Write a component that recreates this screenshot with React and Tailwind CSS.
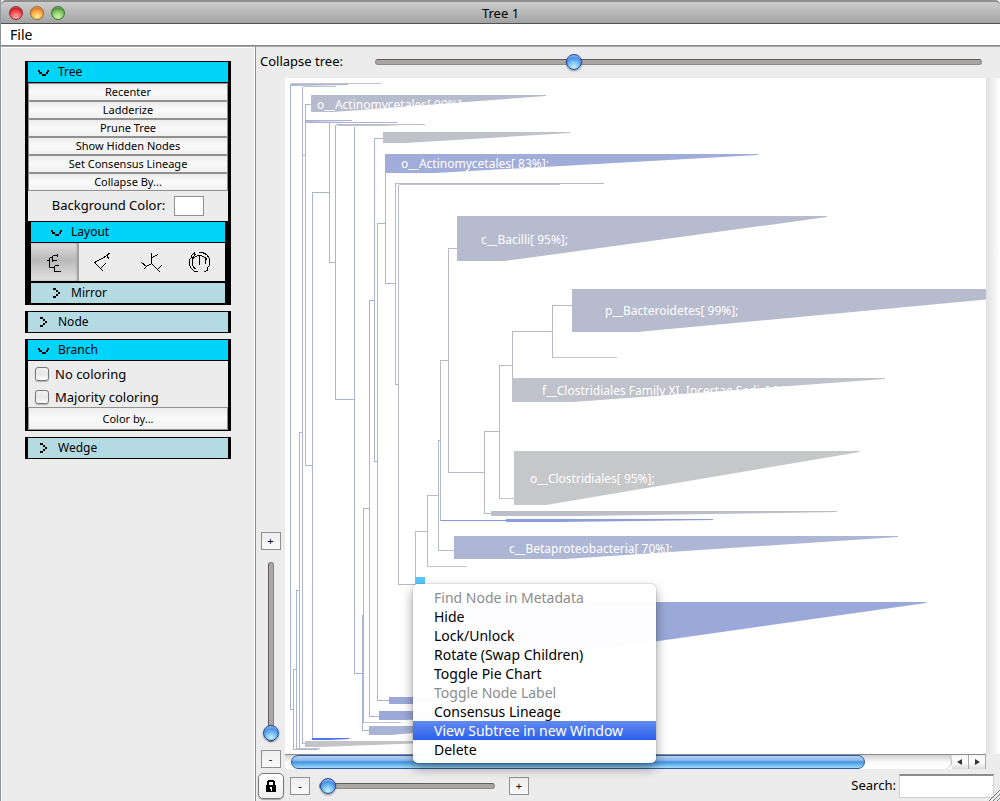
import React from "react";

const BLUE = "#a9b4d8";
const MIX = "#b6bacb";
const GREY = "#c3c4c8";

const BRANCHES = [
  [BLUE, "M290 83V709H293 M302 86V743H305 M302 155H305 M311 104H305V465H312 M302 432H299V747 M299 590H296V748 M296 669H293V749H317"],
  [BLUE, "M305 120H351 M305 122H396 M290 84H347 M329 122V262H335 M329 192H312V738 M335 124V399H354 M354 126V673H362 M383 138H374V461H377 M374 300H369V716H379 M385 172V283H395 M385 223H377V700H389 M369 508H363V722 M363 615H362V730H369"],
  [MIX, "M603 183H395V384H398 M398 184V584H415 M335 124H424 M427 531H415V582 M438 495H427V566 M440 440H438V550H454 M448 360H440V520 M457 248H448V472H484 M499 431H484V513H491 M512 365H499V498H514 M552 331H512V378 M572 305H552V357"],
  [GREY, "M290 83H380 M302 86H335 M338 125H382 M398 184H559 M427 566H466 M552 357H616 M499 498H514 M363 722H400 M296 748H319"],
  ["#8799dc", "M440 520H506"],
];

const WEDGES = [
  ["#a9b4d8", "290,84 347,84 347,85 290,86"],
  ["#a9b4d8", "305,120 351,120 351,121 305,122"],
  ["#c3c4c8", "338,125 424,124 382,126 338,126"],
  ["#b6bbce", "311,95 546,95 546,96 333,112 311,112"],
  ["#c0c2ca", "383,132 570,132 570,133 405,143 383,143"],
  ["#a0acda", "385,154 758,154 758,155 435,173 385,173"],
  ["#b6bbce", "457,216 827,216 827,217 505,261 457,261"],
  ["#b6bbce", "572,289 1100,289 637,332 572,332"],
  ["#bfc1cb", "512,378 885,378 885,379 573,402 512,402"],
  ["#c6c7c9", "514,451 860,451 860,452 546,505 514,505"],
  ["#bcbfc9", "491,511 837,511 837,512 580,516 491,516"],
  ["#8c9cdc", "506,519 713,519 713,520 560,522 506,522"],
  ["#adb6d5", "454,536 898,536 898,537 565,559 454,559"],
  ["#9aa9da", "450,602 926,602 926,603 560,655 450,655"],
  ["#9ba9da", "389,697 600,697 420,704 389,704"],
  ["#9ba9da", "379,711 600,711 405,720 379,720"],
  ["#a8b3d5", "369,726 500,726 390,735 369,735"],
  ["#4f76ee", "312,738 349,738 349,739 330,740 312,740"],
  ["#c3c4c8", "305,741 480,741 320,747 305,747"],
];

const LABELS = [
  [317, 109, "o__Actinomycetales[ 99%];"],
  [401, 168, "o__Actinomycetales[ 83%];"],
  [481, 244, "c__Bacilli[ 95%];"],
  [605, 315, "p__Bacteroidetes[ 99%];"],
  [542, 395, "f__Clostridiales Family XI. Incertae Sedis[ 99%];"],
  [530, 483, "o__Clostridiales[ 95%];"],
  [509, 553, "c__Betaproteobacteria[ 70%];"],
];

const MENU = [
  ["Find Node in Metadata", "disabled"],
  ["Hide"],
  ["Lock/Unlock"],
  ["Rotate (Swap Children)"],
  ["Toggle Pie Chart"],
  ["Toggle Node Label", "disabled"],
  ["Consensus Lineage"],
  ["View Subtree in new Window", "active"],
  ["Delete"],
];

const LAYOUTS = [
  ["Rectangular", "M3 10H6 M6 7V17 M6 7H9 M9 5V11 M9 5H14 M14 3V6 M9 10H13 M6 17H11 M11 15V21 M11 15H15 M11 21H17"],
  ["Triangular", "M3 12L14 6L19 2 M15 5L18 9 M3 12L9 18L12 21 M9 18L14 13"],
  ["Radial", "M12 2V13 M12 7L19 4 M12 13L7 16 M2 12L7 16L4 19 M12 13L18 19L21 22 M18 19L22 15"],
  ["Polar", "M8 2C5 3 4 5 4 7L2 9C1 12 2 15 3 17L7 21H10 M11 2H15C18 3 20 4 21 7L22 8V15L20 17V20L17 21 M5 13C4 9 7 5 12 5S19 8 18 14 M9 3C6 5 4 8 5 13C5 16 7 18 9 19 M12 5V14 M18 7L20 10"],
];

const horizontalSlider =
  "block h-4 min-w-0 appearance-none bg-transparent [&::-webkit-slider-runnable-track]:h-[6px] [&::-webkit-slider-runnable-track]:rounded-full [&::-webkit-slider-runnable-track]:border [&::-webkit-slider-runnable-track]:border-[#8f8b8b] [&::-webkit-slider-runnable-track]:border-t-[#625d5d] [&::-webkit-slider-runnable-track]:bg-[#aaa6a6] [&::-webkit-slider-thumb]:-mt-[6px] [&::-webkit-slider-thumb]:size-4 [&::-webkit-slider-thumb]:appearance-none [&::-webkit-slider-thumb]:rounded-full [&::-webkit-slider-thumb]:border [&::-webkit-slider-thumb]:border-[#23479d] [&::-webkit-slider-thumb]:bg-[radial-gradient(circle_at_50%_85%,#c6f4ff_0%,#6bb6f2_45%,#4f8fe0_65%,#bcd8fa_100%)] [&::-webkit-slider-thumb]:shadow-[0_1px_2px_rgba(0,0,0,0.4)]";

const verticalSlider =
  "block w-4 min-h-0 appearance-none bg-transparent [direction:rtl] [writing-mode:vertical-lr] [&::-webkit-slider-runnable-track]:w-[6px] [&::-webkit-slider-runnable-track]:rounded-full [&::-webkit-slider-runnable-track]:border [&::-webkit-slider-runnable-track]:border-[#858080] [&::-webkit-slider-runnable-track]:border-l-[#625d5d] [&::-webkit-slider-runnable-track]:bg-[#aaa6a6] [&::-webkit-slider-thumb]:-ml-[6px] [&::-webkit-slider-thumb]:size-4 [&::-webkit-slider-thumb]:appearance-none [&::-webkit-slider-thumb]:rounded-full [&::-webkit-slider-thumb]:border [&::-webkit-slider-thumb]:border-[#23479d] [&::-webkit-slider-thumb]:bg-[radial-gradient(circle_at_50%_85%,#c6f4ff_0%,#6bb6f2_45%,#4f8fe0_65%,#bcd8fa_100%)] [&::-webkit-slider-thumb]:shadow-[0_1px_2px_rgba(0,0,0,0.4)]";

function Header({ label, open, nested }) {
  return (
    <button
      type="button"
      aria-expanded={open ? "true" : "false"}
      className={`flex h-5 w-full items-center gap-2 text-left text-[12px] leading-5 ${open ? "bg-[#00d4fa]" : "bg-[#b5dbe2]"} ${nested ? "pl-5" : "pl-[10px]"}`}
    >
      <svg className="size-3 shrink-0" viewBox="0 0 12 12" shapeRendering="crispEdges" aria-hidden="true">
        <path d={open ? "M0 4h2v2h-2z M1 6h3v2h-3z M4 8h4v2h-4z M8 6h2v2h-2z M9 4h2v2h-2z" : "M2 1h3v2h-3z M5 3h2v2h-2z M7 5h2v2h-2z M5 7h2v2h-2z M2 9h3v2h-3z"} />
      </svg>
      {label}
    </button>
  );
}

function SmallButton({ children, tall }) {
  return (
    <button
      type="button"
      className={`block w-full border border-[#909090] bg-linear-to-b from-[#ececec] via-[#fafafa] to-[#f0f0f0] text-center text-[11px] ${tall ? "h-[23px] leading-5" : "h-[18px] leading-4"}`}
    >
      {children}
    </button>
  );
}

function StepButton({ label, children }) {
  return (
    <button
      type="button"
      aria-label={label}
      className="flex h-[18px] w-5 shrink-0 items-center justify-center border border-[#909090] bg-linear-to-b from-[#ededed] to-[#fafafa] text-[11px] leading-4"
    >
      {children}
    </button>
  );
}

function Sidebar() {
  return (
    <aside className="w-[255px] shrink-0 border-r border-[#8c8c8c] pt-[14px] pl-6 shadow-[inset_1px_1px_0_#fff,inset_-1px_0_0_#fff]">
      <div className="flex w-[206px] flex-col gap-[6px]">
        <section className="border-x-[3px] border-y border-black bg-[#ececec]">
          <Header label="Tree" open />
          <div className="border-t border-black">
            {["Recenter", "Ladderize", "Prune Tree", "Show Hidden Nodes", "Set Consensus Lineage", "Collapse By..."].map((t) => (
              <SmallButton key={t}>{t}</SmallButton>
            ))}
          </div>
          <div className="flex h-[30px] items-center justify-center gap-[9px] text-[13px]">
            <span>Background Color:</span>
            <button type="button" aria-label="Choose background color" className="h-5 w-[30px] border border-[#909090] bg-white" />
          </div>
          <div className="border-x-[3px] border-y border-black">
            <Header label="Layout" open nested />
            <div className="flex h-[41px] border-t border-b-2 border-black">
              {LAYOUTS.map(([name, d], i) => (
                <button
                  key={name}
                  type="button"
                  aria-label={name}
                  className={`flex w-12 items-center justify-center ${i === 0 ? "bg-[linear-gradient(to_bottom,#dedede,#b9b9b9_45%,#e2e2e2)] shadow-[inset_-2px_0_2px_#999]" : ""}`}
                >
                  <svg className="size-6" viewBox="0 0 24 24" fill="none" stroke="#000" strokeWidth="1" shapeRendering="crispEdges" aria-hidden="true">
                    <path d={d} transform="translate(.5 .5)" />
                  </svg>
                </button>
              ))}
            </div>
            <Header label="Mirror" nested />
          </div>
        </section>
        <section className="border-x-[3px] border-y border-black">
          <Header label="Node" />
        </section>
        <section className="border-x-[3px] border-y border-black">
          <Header label="Branch" open />
          <div className="border-t border-black">
            {["No coloring", "Majority coloring"].map((t) => (
              <label key={t} className="flex h-[23px] items-center gap-[6px] pt-[2px] pl-[7px] text-[13px] leading-5">
                <input
                  type="checkbox"
                  className="size-[14px] appearance-none rounded-[3px] border border-[#777] bg-linear-to-b from-[#f2f2f2] via-[#e6e6e6] to-white shadow-[0_1px_1px_rgba(0,0,0,0.25)]"
                />
                {t}
              </label>
            ))}
            <SmallButton tall>Color by...</SmallButton>
          </div>
        </section>
        <section className="border-x-[3px] border-y border-black">
          <Header label="Wedge" />
        </section>
      </div>
    </aside>
  );
}

function TreeCanvas() {
  return (
    <svg className="block size-full bg-white" role="img" aria-label="Phylogenetic tree">
      <g transform="translate(-285 -78)">
        <g transform="translate(.5 .5)" fill="none" strokeWidth="1" shapeRendering="crispEdges">
          {BRANCHES.map(([c, d]) => (
            <path key={d} d={d} stroke={c} />
          ))}
        </g>
        {WEDGES.map(([c, p]) => (
          <polygon key={p} points={p} fill={c} />
        ))}
        <rect x="415" y="577" width="10" height="7" fill="#5cc6fc" />
        <g fill="#fff" className="text-[12px]">
          {LABELS.map(([x, y, t]) => (
            <text key={y} x={x} y={y}>
              {t}
            </text>
          ))}
        </g>
      </g>
    </svg>
  );
}

function ContextMenu() {
  return (
    <div role="menu" className="absolute top-[506px] left-32 w-[243px] rounded-[5px] bg-white/98 py-1 shadow-[0_0_1px_rgba(0,0,0,0.6),0_5px_12px_rgba(0,0,0,0.4)]">
      {MENU.map(([t, state]) => (
        <button
          key={t}
          type="button"
          role="menuitem"
          disabled={state === "disabled"}
          className={`block h-[19px] w-full pl-[21px] text-left text-[14px] leading-[19px] whitespace-nowrap ${
            state === "active" ? "bg-linear-to-b from-[#6289f0] to-[#2a5fec] text-white" : state === "disabled" ? "text-[#8c8c8c]" : "text-black"
          }`}
        >
          {t}
        </button>
      ))}
    </div>
  );
}

function ScrollBar() {
  return (
    <div className="flex h-[15px] border-t border-[#8b8b8b] bg-linear-to-b from-[#cfcfcf] via-[#fafafa] to-white">
      <div className="mr-[-6px] min-w-0 flex-1 rounded-r-full border-r border-[#b5b5b5] pl-[6px]">
        <div className="h-[14px] w-[87%] rounded-full border border-[#2c5aa8] bg-[linear-gradient(to_bottom,#b5d0f0,#8fbdec_35%,#3f92e0_50%,#a5dcfa)]" />
      </div>
      <div className="w-[6px]" />
      {[
        ["Scroll left", "M6 1L1 4L6 7Z"],
        ["Scroll right", "M2 1L7 4L2 7Z"],
      ].map(([name, d]) => (
        <button key={name} type="button" aria-label={name} className="flex w-[17px] items-center justify-center border-r border-[#aaa] bg-linear-to-b from-[#f4f4f4] via-white to-[#dcdcdc]">
          <svg className="size-2" viewBox="0 0 8 8" fill="#333" aria-hidden="true">
            <path d={d} />
          </svg>
        </button>
      ))}
    </div>
  );
}

export default function App() {
  return (
    <div className="flex min-h-screen flex-col border-l border-[#8f959e] bg-[#ececec] font-['Noto_Sans','Open_Sans',sans-serif] text-black">
      <header className="flex h-6 items-center rounded-t-[5px] border-t-2 border-b border-t-[#8f8f8f] border-b-[#515151] bg-linear-to-b from-[#cdcdcd] to-[#a3a3a3] px-2">
        <div className="flex flex-1 gap-[7px]">
          <button type="button" aria-label="Close" className="size-[14px] rounded-full border border-[#8f2a2c] bg-[radial-gradient(circle_at_50%_85%,#ffb3a8_0%,#f04a50_50%,#c51f2b_75%,#f2c8c8_100%)]" />
          <button type="button" aria-label="Minimize" className="size-[14px] rounded-full border border-[#a3622a] bg-[radial-gradient(circle_at_50%_85%,#fff08c_0%,#f7ae4a_50%,#dc7b28_75%,#f5dcc0_100%)]" />
          <button type="button" aria-label="Zoom" className="size-[14px] rounded-full border border-[#3f7434] bg-[radial-gradient(circle_at_50%_85%,#d4f7a4_0%,#84c86a_50%,#4c973e_75%,#cfe6c8_100%)]" />
        </div>
        <h1 className="text-[13px] leading-5">Tree 1</h1>
        <div className="flex-1" />
      </header>
      <nav className="flex h-[22px] items-center border-b border-[#858585] bg-white pl-[9px]">
        <button type="button" className="text-[14px] leading-5">File</button>
      </nav>
      <div className="flex flex-1 border-t border-[#a9a9a9]">
        <Sidebar />
        <main className="flex min-w-0 flex-1 flex-col">
          <div className="flex h-[31px] items-center gap-8 pr-[18px] pb-[2px] pl-1">
            <label htmlFor="collapse" className="shrink-0 text-[13px]">Collapse tree:</label>
            <input id="collapse" type="range" max="1000" defaultValue="322" className={`${horizontalSlider} flex-1`} />
          </div>
          <div className="flex flex-1">
            <div className="flex w-[29px] shrink-0 flex-col items-center justify-end gap-2 pb-[1px]">
              <StepButton label="Zoom in vertically">+</StepButton>
              <input type="range" aria-label="Vertical zoom" max="100" defaultValue="0" className={`${verticalSlider} mt-1 h-[180px]`} />
              <StepButton label="Zoom out vertically">-</StepButton>
            </div>
            <div className="relative flex min-w-0 flex-1 flex-col">
              <div className="relative min-h-0 flex-1 overflow-hidden">
                <TreeCanvas />
              </div>
              <ScrollBar />
              <ContextMenu />
            </div>
            <div className="mb-[15px] w-[14px] shrink-0 bg-linear-to-r from-[#e0e0e0] to-white" />
          </div>
          <div className="flex h-8 shrink-0 items-center pt-px pr-[6px] pl-[2px]">
            <button type="button" aria-label="Lock" className="mr-[6px] flex size-[26px] items-center justify-center rounded-[5px] border border-[#777] bg-linear-to-b from-white to-[#f0f0f0] shadow-[0_1px_1px_rgba(0,0,0,0.3)]">
              <svg className="size-3" viewBox="0 0 12 12" shapeRendering="crispEdges" aria-hidden="true">
                <path d="M3 0h6v1h1v4h-2v-3h-4v3h-2v-4h1z" />
                <path d="M1 5H11V12H1Z" />
                <path d="M5 7H7V9H6.5V11H5.5V9H5Z" fill="#fff" />
              </svg>
            </button>
            <StepButton label="Zoom out horizontally">-</StepButton>
            <input type="range" aria-label="Horizontal zoom" max="100" defaultValue="0" className={`${horizontalSlider} mr-[14px] ml-[9px] w-[176px]`} />
            <StepButton label="Zoom in horizontally">+</StepButton>
            <div className="flex flex-1 items-center justify-end gap-[3px]">
              <label htmlFor="search" className="text-[13px]">Search:</label>
              <input id="search" type="text" className="h-6 w-[95px] border border-[#d0d0d0] border-t-2 border-t-[#8c8c8c] bg-white px-1 text-[13px] outline-none" />
            </div>
          </div>
        </main>
      </div>
      <svg className="absolute right-0 bottom-0 size-[11px]" viewBox="0 0 11 11" stroke="#777" strokeWidth="1" aria-hidden="true">
        <path d="M0 11L11 0M4 11L11 4M8 11L11 8" />
      </svg>
    </div>
  );
}
